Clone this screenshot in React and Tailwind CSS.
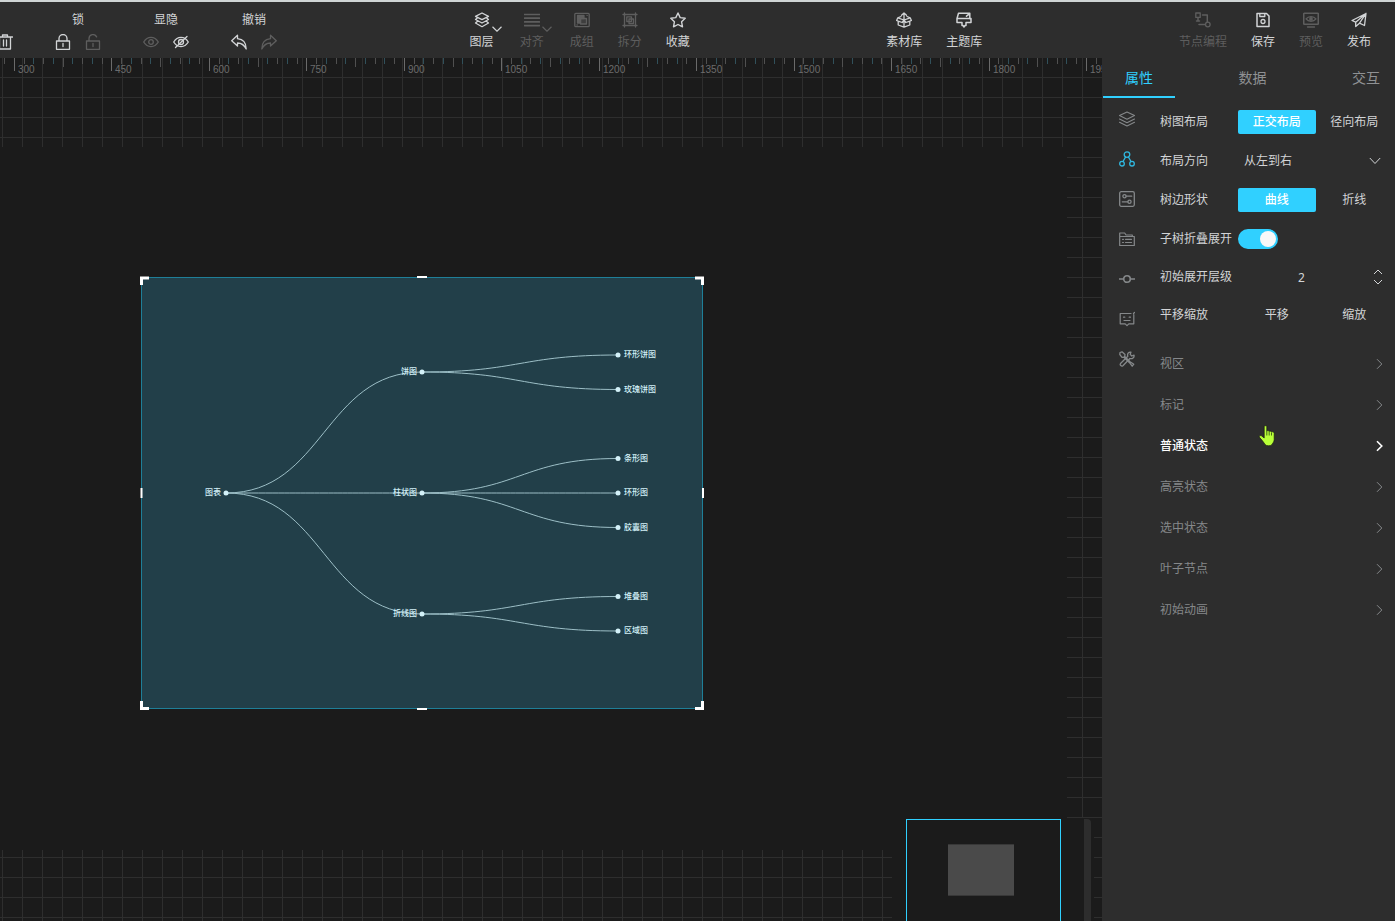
import React, { useState } from "react";

const Svg = ({ size = 16, children, className = "" }) => (
  <svg
    width={size}
    height={size}
    viewBox="0 0 16 16"
    fill="none"
    stroke="currentColor"
    strokeWidth="1.3"
    strokeLinecap="round"
    strokeLinejoin="round"
    className={`block shrink-0 ${className}`}
    aria-hidden="true"
  >
    {children}
  </svg>
);

const icons = {
  trash: <path d="M.5 3h15M5.500 3V1h5v2M2.500 3v12h11V3M6.500 6v6M9.500 6v6" />,
  lock: <path d="M1.500 7h13v8.300h-13zM4 7V4.500a4 4 0 0 1 8 0V7M8 9.500v3" />,
  unlock: <path d="M1.500 7h13v8.300h-13zM4 7V4.500a4 4 0 0 1 7.600-1.600M8 9.500v3" />,
  eye: (
    <>
      <path d="M.7 8C2.500 5 5 3.400 8 3.400S13.500 5 15.300 8C13.500 11 11 12.600 8 12.600S2.500 11 .7 8z" />
      <circle cx="8" cy="8" r="2.300" />
    </>
  ),
  eyeOff: (
    <>
      <path d="M.7 8C2.500 5 5 3.400 8 3.400S13.500 5 15.300 8C13.500 11 11 12.600 8 12.600S2.500 11 .7 8z" />
      <circle cx="8" cy="8" r="2.500" />
      <path d="M2.500 13.500l11.500-11" />
    </>
  ),
  undo: <path d="M6.500 1.200L.7 6.700l5.800 5.300V9c4 0 6.500 1.500 8.700 6C15.200 9 12 5.200 6.500 4.700z" />,
  redo: <path d="M9.500 1.200L15.300 6.700l-5.800 5.300V9C5.500 9 3 10.500.8 15 .8 9 4 5.200 9.500 4.700z" />,
  layers: (
    <path d="M8 1L1.500 4.300 8 7.700l6.500-3.400zM3.300 6L1.500 7.500 8 11l6.500-3.500L12.700 6M3.300 9.500L1.500 11 8 14.700 14.500 11l-1.800-1.500" />
  ),
  sideLayers: (
    <path
      d="M8 1L.5 4.600 8 8.300l7.500-3.700zM.5 8L8 11.700 15.500 8M.5 11.200L8 14.900l7.500-3.700"
      strokeWidth="1.100"
    />
  ),
  align: <path d="M.5 2.500h15M.5 6.200h15M.5 9.900h15M.5 13.600h15" strokeWidth="1.700" />,
  group: (
    <>
      <rect x=".8" y="1.300" width="14.400" height="13.400" rx="1" />
      <path d="M3.500 3.500h6.500v3H6.500V11h-3z" fill="currentColor" />
      <rect x="6.500" y="6.500" width="6" height="5.500" fill="currentColor" fillOpacity=".35" />
      <path d="M3 13h.2M13 3.300h.2" />
    </>
  ),
  ungroup: (
    <>
      <path d="M2.500 1v14M13.500 1v14M1 2.500h14M1 13.500h14" />
      <rect x="4.800" y="4.800" width="4.700" height="4.700" />
      <rect x="7" y="7" width="4.500" height="4.500" />
    </>
  ),
  star: (
    <path
      d="M8 1l2.200 4.600 5 .7-3.600 3.500.9 5L8 12.500l-4.500 2.300.9-5L.8 6.300l5-.7z"
      strokeWidth="1.400"
    />
  ),
  box: (
    <path d="M8 7.500V1M5.500 3.300L8 1l2.500 2.300M5 4.500L1.800 5.800.6 8.500 2.200 9.200V13L8 15.200l5.800-2.200V9.200l1.600-.7-1.200-2.700L11 4.500M1.800 5.800L8 8l6.200-2.200M8 8v7.200M2.200 9.200l4 1.300L8 8l1.800 2.500 4-1.300" />
  ),
  brush: (
    <path
      d="M2.500 1.200h11.300v5.500M2.500 1.200L1 6.500v4h5v3h1l1 1.500 1-1.500h1v-3h5v-4H1M10.500 4.200l3-2.500"
      strokeWidth="1.500"
    />
  ),
  nodes: (
    <>
      <rect x=".8" y="1" width="4.400" height="4.400" />
      <circle cx="12.800" cy="12.500" r="2.300" />
      <path d="M7.500 3h4.800v7M3 5.500V9M1.500 9h3M4 12.500h6.300" strokeWidth="1.500" />
    </>
  ),
  save: (
    <>
      <path d="M2 1.500h9.500L14 4v10.500H2z" strokeWidth="1.500" />
      <path d="M4.800 1.800v2.700h5V1.800" />
      <circle cx="8" cy="9.500" r="2" />
    </>
  ),
  preview: (
    <>
      <rect x=".7" y="1.300" width="14.600" height="11" rx=".6" strokeWidth="1.600" />
      <path d="M3 6.900C5.500 3.800 10.500 3.800 13 6.900 10.500 10 5.500 10 3 6.900zM4.500 15h7" />
      <circle cx="8" cy="6.900" r="1.200" fill="currentColor" />
    </>
  ),
  send: <path d="M15 1.500L1 8.500l3.700 1.700L15 1.500l-1.500 12-5-2.300M4.700 10.200v4.300l3.800-3.300L15 1.500" />,
  tree: (
    <>
      <circle cx="8" cy="3.600" r="2.800" />
      <circle cx="3" cy="12.700" r="2.300" />
      <circle cx="13" cy="12.700" r="2.300" />
      <path d="M6.500 6.200L4 10.500M9.500 6.200l2.500 4.300" />
    </>
  ),
  sliders: (
    <>
      <rect x=".7" y=".7" width="14.600" height="14.600" rx="1.500" />
      <circle cx="5.500" cy="5.200" r="1.600" />
      <circle cx="10.500" cy="10.800" r="1.600" />
      <path d="M7.200 5.200h5.500M3.300 10.800h5.500" />
    </>
  ),
  folder: (
    <path
      d="M.7 14.500V2h5l1.300 2h6.300v1.500M.7 14.500h14.600V5.500H.7M3.500 8.300h1M6.500 8.300h6M3.500 11.500h1M6.500 11.500h6"
      strokeWidth="1.200"
    />
  ),
  commit: (
    <>
      <circle cx="8" cy="8" r="3.300" strokeWidth="1.600" />
      <path d="M.5 8h4M11.500 8h4" strokeWidth="1.600" />
    </>
  ),
  comment: (
    <path
      d="M12 2.500H1.200v10.300h5L8 14.600l1.800-1.800h5V3.500M14.500 2.500l1-1M4.500 6.200h1.300M10.200 6.200h1.300M5 9.500h6"
      strokeWidth="1.200"
    />
  ),
  tools: (
    <>
      <path d="M1 1.500l2-.7 3 2.700-.3 2L11 10.800l3.800 2.400-1.600 2-2.700-3.500L5 6.200l-2 .1L.8 3.500z" />
      <path d="M15 4.200l-2.200.8-1.600-1.600.7-2.200C9.500.8 8 3 8.800 5.200L1.500 12.500c-1 1.500 1 3.300 2.400 2.200l7-7.200c2.400.8 4.600-1 4.100-3.300z" />
    </>
  ),
};

const ToolButton = ({ icon, label, disabled, menu }) => (
  <button
    type="button"
    disabled={disabled}
    className={`relative flex flex-col items-center gap-1.5 ${menu ? "mr-0.5" : ""} ${
      disabled ? "text-[#5e5e5e]" : "text-[#d2d4d6]"
    }`}
  >
    <Svg>{icons[icon]}</Svg>
    <span>{label}</span>
    {menu && (
      <svg
        width="10"
        height="6"
        viewBox="0 0 10 6"
        fill="none"
        stroke="currentColor"
        strokeWidth="1.200"
        className="absolute top-3.5 -right-2"
        aria-hidden="true"
      >
        <path d="M.5 .8L5 5.200 9.500 .8" />
      </svg>
    )}
  </button>
);

const PairGroup = ({ title, items }) => (
  <div className="flex flex-col items-center gap-1.5">
    <span>{title}</span>
    <div className="flex">
      {items.map((item) => (
        <button
          key={item.icon}
          type="button"
          aria-label={item.name}
          disabled={item.off}
          className={`flex w-[30px] h-4 items-center justify-center ${
            item.off ? "text-[#5e5e5e]" : "text-[#d2d4d6]"
          }`}
        >
          <Svg>{icons[item.icon]}</Svg>
        </button>
      ))}
    </div>
  </div>
);

const Header = () => (
  <header className="flex h-[58px] items-center justify-between border-t-2 border-[#cfd4d4] bg-[#2d2d2d] pt-0.5 pr-6 text-[#d2d4d6]">
    <div className="-mr-[11px] flex items-end gap-7">
      <button type="button" aria-label="删除" className="-ml-[3px] mr-[7px]">
        <Svg>{icons.trash}</Svg>
      </button>
      <PairGroup
        title="锁"
        items={[
          { icon: "lock", name: "锁定" },
          { icon: "unlock", name: "解锁", off: true },
        ]}
      />
      <PairGroup
        title="显隐"
        items={[
          { icon: "eye", name: "显示", off: true },
          { icon: "eyeOff", name: "隐藏" },
        ]}
      />
      <PairGroup
        title="撤销"
        items={[
          { icon: "undo", name: "撤销" },
          { icon: "redo", name: "重做", off: true },
        ]}
      />
    </div>
    <div className="flex gap-6">
      <ToolButton icon="layers" label="图层" menu />
      <ToolButton icon="align" label="对齐" menu disabled />
      <ToolButton icon="group" label="成组" disabled />
      <ToolButton icon="ungroup" label="拆分" disabled />
      <ToolButton icon="star" label="收藏" />
    </div>
    <div className="flex gap-6">
      <ToolButton icon="box" label="素材库" />
      <ToolButton icon="brush" label="主题库" />
    </div>
    <div className="flex gap-6">
      <ToolButton icon="nodes" label="节点编程" disabled />
      <ToolButton icon="save" label="保存" />
      <ToolButton icon="preview" label="预览" disabled />
      <ToolButton icon="send" label="发布" />
    </div>
  </header>
);

// 150 units between two labelled ticks
const MAJOR = 97.45;
const Ruler = () => {
  const ticks = [];
  for (let i = -1; i < 120; i++) {
    const x = Math.round(14 + (i * MAJOR) / 10);
    const major = i % 10 === 0;
    const half = i % 5 === 0;
    ticks.push(
      <g key={i}>
        <rect
          x={x}
          y="0"
          width="1"
          height={major ? 13 : half ? 9 : 6}
          fill={major ? "#6a6a6a" : i % 2 ? "#505050" : "#31505a"}
        />
        {major && (
          <text x={x + 4} y="15" fontSize="10" fill="#6c6c6c">
            {300 + i * 15}
          </text>
        )}
      </g>
    );
  }
  return (
    <svg
      className="absolute inset-x-0 top-0 h-5 w-full font-['Liberation_Sans',sans-serif]"
      aria-label="标尺"
    >
      {ticks}
    </svg>
  );
};

const nodes = [
  { id: "root", name: "图表", x: 85, y: 216, side: "left" },
  { id: "pie", name: "饼图", x: 281, y: 95, side: "left", parent: "root" },
  { id: "bar", name: "柱状图", x: 281, y: 216, side: "left", parent: "root" },
  { id: "line", name: "折线图", x: 281, y: 337, side: "left", parent: "root" },
  { id: "p1", name: "环形饼图", x: 477, y: 78, parent: "pie" },
  { id: "p2", name: "玫瑰饼图", x: 477, y: 112.5, parent: "pie" },
  { id: "b1", name: "条形图", x: 477, y: 181.5, parent: "bar" },
  { id: "b2", name: "环形图", x: 477, y: 216, parent: "bar" },
  { id: "b3", name: "胶囊图", x: 477, y: 250.5, parent: "bar" },
  { id: "l1", name: "堆叠图", x: 477, y: 319.5, parent: "line" },
  { id: "l2", name: "区域图", x: 477, y: 354, parent: "line" },
];

const TreeChart = () => (
  <svg width="562" height="432" viewBox="0 0 562 432" className="block overflow-visible">
    <rect x=".5" y=".5" width="561" height="431" fill="#223f49" stroke="#1f7f98" />
    {nodes
      .filter((n) => n.parent)
      .map((n) => {
        const p = nodes.find((m) => m.id === n.parent);
        const mid = (p.x + n.x) / 2;
        return (
          <path
            key={n.id}
            d={`M${p.x} ${p.y}C${mid} ${p.y} ${mid} ${n.y} ${n.x} ${n.y}`}
            fill="none"
            stroke="#9dbfc7"
          />
        );
      })}
    {nodes.map((n) => (
      <g key={n.id} fill="#d3f1f8">
        <circle cx={n.x} cy={n.y} r="2.5" />
        <text
          x={n.side === "left" ? n.x - 5 : n.x + 6}
          y={n.y + 2}
          fontSize="8"
          fontWeight="500"
          textAnchor={n.side === "left" ? "end" : "start"}
        >
          {n.name}
        </text>
      </g>
    ))}
    <g fill="none" stroke="#ffffff" strokeWidth="2">
      <path
        d="M.5 8V1H8M554 1h7.500v7M.5 424v7.500H8M554 431.500h7.500V424"
        strokeWidth="3"
      />
      <path d="M276 0h10M276 432h10M.5 211v10M562 211v10" />
    </g>
  </svg>
);

const Canvas = () => (
  <main className="relative flex min-w-0 flex-1 flex-col overflow-hidden bg-[#1b1b1b] bg-[linear-gradient(to_right,#2e2e2e_1px,transparent_1px),linear-gradient(to_bottom,#2e2e2e_1px,transparent_1px)] bg-[length:20px_20px] bg-[position:2px_19px] pt-[89px] pr-[35px] pb-[71px]">
    <Ruler />
    <div className="relative flex-1 bg-[#1b1b1b]">
      <div className="absolute left-[141px] top-[130px]">
        <TreeChart />
      </div>
    </div>
    <div className="absolute right-2 bottom-0 flex h-[103px] w-[202px] gap-[23px] bg-[#1b1b1b] pt-px pl-3.5">
      <div className="w-[155px] border border-b-0 border-[#30d0ff] pt-6 pl-[41px]">
        <div className="h-[52px] w-[66px] border-y border-[#383838] bg-[#4a4a4a]" />
      </div>
      <div className="w-[7px] rounded-tr-sm bg-[#2d2d2d]" />
    </div>
  </main>
);

const Choice = ({ id, label, options, value, onChange }) => (
  <div className="flex h-6 items-center">
    <span id={id} className="w-[78px] shrink-0">
      {label}
    </span>
    <div role="group" aria-labelledby={id} className="flex flex-1">
      {options.map((opt) => (
        <button
          key={opt}
          type="button"
          onClick={() => onChange(opt)}
          className={`h-6 flex-1 rounded-xs ${
            value === opt ? "bg-[#30d0ff] font-medium text-white" : "text-[#d2d4d6]"
          }`}
        >
          {opt}
        </button>
      ))}
    </div>
  </div>
);

const HandCursor = () => (
  <svg
    width="18"
    height="22"
    viewBox="0 0 18 22"
    className="pointer-events-none absolute left-[98px] top-0"
    aria-hidden="true"
  >
    <path
      d="M6.200 1.500C6.200.5 8.700.5 8.800 1.500V6c.7-.7 2-.5 2.300.4.800-.6 2-.3 2.300.6.900-.5 2.600-.1 2.800 1.200v6.300c0 2.500-1.600 3.500-2.200 5-.8 1.700-5.800 1.700-7 0-.8-1.700-2-2.800-3-4.300L1.200 12c-.4-1.400 1.700-1.900 2.600-1l2.400 2z"
      fill="#b8ff38"
      stroke="#15180f"
      strokeWidth=".7"
    />
    <path d="M8.800 6v4.500M11.200 6.500v4M13.500 7.500v3" stroke="#2c4210" strokeWidth=".8" />
  </svg>
);

const sections = ["视区", "标记", "普通状态", "高亮状态", "选中状态", "叶子节点", "初始动画"];

const sideTabs = [
  { icon: "sideLayers", name: "图层" },
  { icon: "tree", name: "树图" },
  { icon: "sliders", name: "设置" },
  { icon: "folder", name: "目录" },
  { icon: "commit", name: "节点" },
  { icon: "comment", name: "提示" },
  { icon: "tools", name: "工具" },
];

const Panel = () => {
  const [layout, setLayout] = useState("正交布局");
  const [edge, setEdge] = useState("曲线");
  const [move, setMove] = useState("");
  const [fold, setFold] = useState(true);
  const [level, setLevel] = useState(2);

  return (
    <aside className="w-[293px] shrink-0 bg-[#2d2d2d] pl-px text-[#d2d4d6]">
      <div role="tablist" className="flex h-10 justify-between text-sm text-[#8f9193]">
        <button
          type="button"
          role="tab"
          aria-selected="true"
          className="border-b-2 border-[#30d0ff] px-[22px] pt-0.5 text-[#30d0ff]"
        >
          属性
        </button>
        <button
          type="button"
          role="tab"
          aria-selected="false"
          className="border-b-2 border-transparent px-[22px] pt-0.5"
        >
          数据
        </button>
        <button
          type="button"
          role="tab"
          aria-selected="false"
          className="border-b-2 border-transparent pt-0.5 pr-[15px] pl-[22px]"
        >
          交互
        </button>
      </div>

      <div className="flex">
        <nav className="flex flex-col gap-6 pt-[13px] pr-[25px] pl-4">
          {sideTabs.map((tab) => (
            <button
              key={tab.icon}
              type="button"
              aria-label={tab.name}
              className={tab.icon === "tree" ? "text-[#30b8e0]" : "text-[#85888a]"}
            >
              <Svg>{icons[tab.icon]}</Svg>
            </button>
          ))}
        </nav>

        <div className="min-w-0 flex-1 pt-3">
          <div className="flex flex-col gap-[15px] pr-0.5">
            <Choice
              id="layout"
              label="树图布局"
              options={["正交布局", "径向布局"]}
              value={layout}
              onChange={setLayout}
            />

            <div className="flex h-6 items-center">
              <label htmlFor="direction" className="w-[78px] shrink-0">
                布局方向
              </label>
              <div className="relative flex-1">
                <select id="direction" className="h-6 w-full appearance-none bg-transparent pl-1.5 outline-none">
                  <option>从左到右</option>
                  <option>从右到左</option>
                  <option>从上到下</option>
                  <option>从下到上</option>
                </select>
                <svg
                  width="12"
                  height="8"
                  viewBox="0 0 12 8"
                  fill="none"
                  stroke="currentColor"
                  className="pointer-events-none absolute top-2 right-3"
                  aria-hidden="true"
                >
                  <path d="M.8 1L6 6.500 11.200 1" />
                </svg>
              </div>
            </div>

            <Choice
              id="edge"
              label="树边形状"
              options={["曲线", "折线"]}
              value={edge}
              onChange={setEdge}
            />

            <div className="flex h-6 items-center">
              <label htmlFor="fold" className="w-[78px] shrink-0">
                子树折叠展开
              </label>
              <input
                id="fold"
                type="checkbox"
                checked={fold}
                onChange={(e) => setFold(e.target.checked)}
                className="relative h-5 w-10 appearance-none rounded-full bg-[#555555] before:absolute before:top-0.5 before:left-0.5 before:h-4 before:w-4 before:rounded-full before:bg-[#f8f8f8] checked:bg-[#30d0ff] checked:before:left-[22px]"
              />
            </div>

            <div className="flex h-[22px] items-center">
              <label htmlFor="level" className="w-[78px] shrink-0">
                初始展开层级
              </label>
              <input
                id="level"
                type="text"
                inputMode="numeric"
                value={level}
                onChange={(e) => setLevel(Number(e.target.value) || 0)}
                className="h-[22px] w-0 flex-1 bg-transparent text-center font-['Noto_Sans',sans-serif] outline-none"
              />
              <div className="flex flex-col gap-1 pr-2.5 pl-2">
                <button type="button" aria-label="增加" onClick={() => setLevel(level + 1)}>
                  <svg width="10" height="6" viewBox="0 0 10 6" fill="none" stroke="currentColor" className="block">
                    <path d="M1 5l4-4 4 4" />
                  </svg>
                </button>
                <button type="button" aria-label="减少" onClick={() => setLevel(level - 1)}>
                  <svg width="10" height="6" viewBox="0 0 10 6" fill="none" stroke="currentColor" className="block">
                    <path d="M1 1l4 4 4-4" />
                  </svg>
                </button>
              </div>
            </div>

            <Choice
              id="move"
              label="平移缩放"
              options={["平移", "缩放"]}
              value={move}
              onChange={setMove}
            />
          </div>

          <div className="mt-4 pr-3">
            {sections.map((name) => {
              const active = name === "普通状态";
              return (
                <button
                  key={name}
                  type="button"
                  className={`relative flex h-[41px] w-full items-center justify-between ${
                    active ? "font-medium text-white" : "text-[#85888a]"
                  }`}
                >
                  {name}
                  <svg
                    width="7"
                    height="12"
                    viewBox="0 0 7 12"
                    fill="none"
                    stroke="currentColor"
                    strokeWidth={active ? 1.6 : 1}
                    aria-hidden="true"
                  >
                    <path d="M1 1.200L5.800 6 1 10.800" />
                  </svg>
                  {active && <HandCursor />}
                </button>
              );
            })}
          </div>
        </div>
      </div>
    </aside>
  );
};

export default function App() {
  return (
    <div
      lang="zh-CN"
      className="flex min-h-screen flex-col bg-[#1b1b1b] font-['Liberation_Sans','Noto_Sans_CJK_SC',sans-serif] text-xs"
    >
      <Header />
      <div className="flex flex-1">
        <Canvas />
        <Panel />
      </div>
    </div>
  );
}
